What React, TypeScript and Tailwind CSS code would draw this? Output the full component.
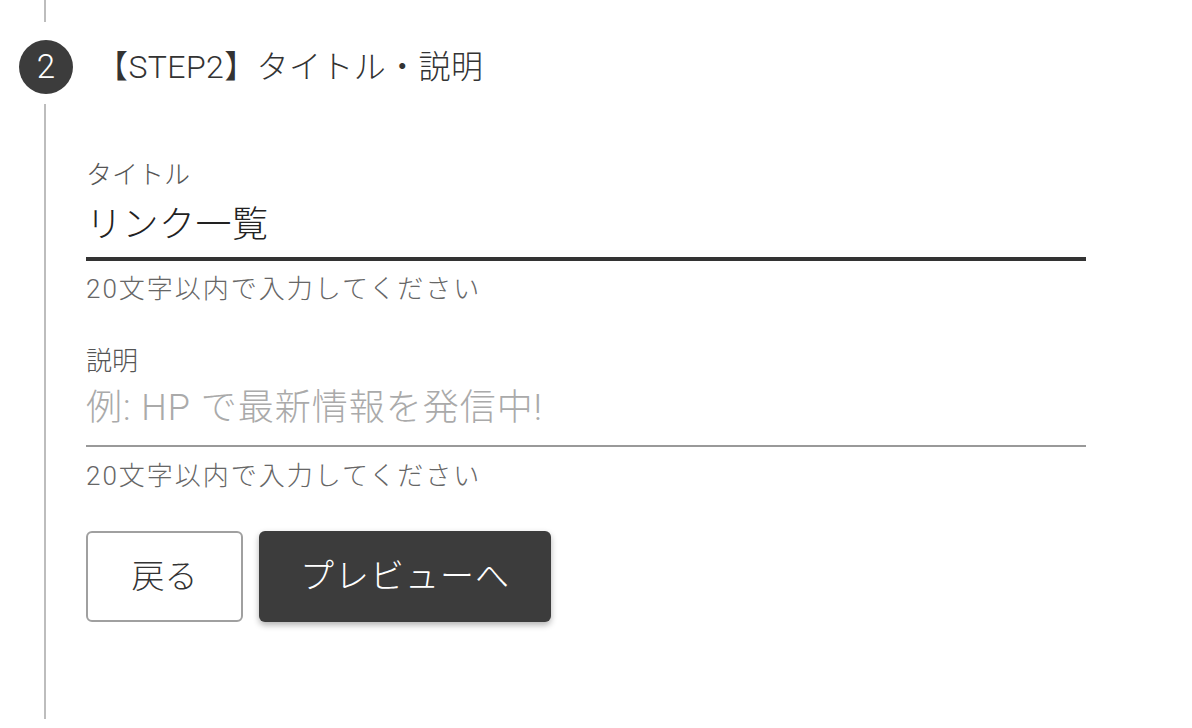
const font = { fontFamily: 'Roboto, "Noto Sans CJK JP", sans-serif' };

export default function App() {
  return (
    <div className="relative h-[728px] w-[1192px] overflow-hidden bg-white font-light" style={font}>
      {/* 上の区切り線 */}
      <div className="ml-[44px] h-[22px] w-[2px] bg-[#bdbdbd]" />

      {/* ステップ見出し */}
      <div className="mt-[18px] flex items-center pl-[19px]">
        <div className="flex h-[54px] w-[54px] items-center justify-center rounded-full bg-[#3c3c3c] pb-[1px] text-[33px] leading-none text-white">
          2
        </div>
        <span className="ml-[23px] text-[32px] leading-[40px] tracking-[0.4px] text-[#333]">【STEP2】タイトル・説明</span>
      </div>

      {/* 入力エリア */}
      <div className="ml-[44px] mt-[10px] h-[615px] border-l-2 border-[#bdbdbd] pl-[40px] pt-[53px]">
        <div className="w-[1000px]">
          <p className="text-[26px] leading-[36px] text-[#555]">タイトル</p>
          <div className="mt-[8px] border-b-4 border-[#333] pb-[8px] text-[36px] leading-[48px] tracking-[0.5px] text-[#222]">
            リンク一覧
          </div>
          <p className="mt-[10px] text-[26px] leading-[36px] tracking-[2px] text-[#666]">20文字以内で入力してください</p>

          <p className="mt-[36px] text-[26px] leading-[36px] text-[#555]">説明</p>
          <div className="mt-[5px] border-b-2 border-[#999] pb-[13px] text-[36px] leading-[48px] tracking-[1px] text-[#aaa]">
            例: HP で最新情報を発信中!
          </div>
          <p className="mt-[11px] text-[26px] leading-[36px] tracking-[2px] text-[#666]">20文字以内で入力してください</p>
        </div>

        <div className="mt-[37px] flex gap-[16px]">
          <button className="flex h-[91px] w-[157px] items-center justify-center rounded-[6px] border-2 border-[#a0a0a0] bg-white text-[33px] text-[#333]">
            戻る
          </button>
          <button className="flex h-[91px] w-[292px] items-center justify-center rounded-[6px] bg-[#3c3c3c] text-[34px] tracking-[1px] text-white shadow-[0_3px_6px_rgba(0,0,0,0.3)]">
            プレビューへ
          </button>
        </div>
      </div>
    </div>
  );
}
